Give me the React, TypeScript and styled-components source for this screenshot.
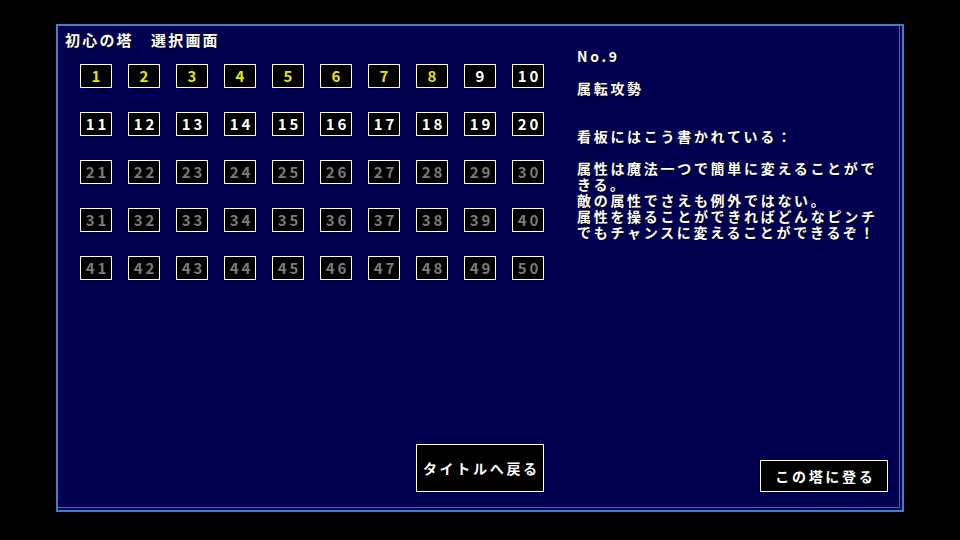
import React from 'react';
import styled, { createGlobalStyle } from 'styled-components';

const GlobalStyle = createGlobalStyle`
    html, body {
        margin: 0;
        padding: 0;
        background: #000;
    }
    body {
        width: 960px;
        height: 540px;
        overflow: hidden;
        font-family: 'Noto Sans CJK JP', 'Noto Sans', sans-serif;
        font-weight: 700;
        color: #fff;
    }
`;

const Screen = styled.div`
    width: 960px;
    height: 540px;
    padding: 24px 0 0 56px;
    box-sizing: border-box;
`;

const Window = styled.div`
    display: flex;
    width: 848px;
    height: 488px;
    box-sizing: border-box;
    padding: 4px 14px 18px 7px;
    background: #000050;
    border: 2px solid #3f7fc4;
    box-shadow: inset -2px -2px 0 #000050, inset -3px -3px 0 #5a5ad8;
`;

const LeftColumn = styled.div`
    display: flex;
    flex-direction: column;
    width: 479px;
`;

const Title = styled.div`
    font-size: 15px;
    line-height: 20px;
    letter-spacing: 2.2px;
    text-shadow: 1px 1px 0 #000;
`;

const FloorGrid = styled.div`
    display: grid;
    grid-template-columns: repeat(10, 32px);
    grid-auto-rows: 24px;
    column-gap: 16px;
    row-gap: 24px;
    margin: 14px 0 0 15px;
`;

type CellState = 'cleared' | 'open' | 'locked';

const cellColors: Record<CellState, string> = {
    cleared: '#e6e600',
    open: '#ffffff',
    locked: '#7a7a7a',
};

const Cell = styled.div<{ $state: CellState }>`
    box-sizing: border-box;
    border: 1px solid #fff;
    background: #000;
    color: ${(p) => cellColors[p.$state]};
    font-size: 15px;
    line-height: 22px;
    letter-spacing: 3px;
    padding-left: 3px;
    text-align: center;
`;

const Spacer = styled.div`
    flex: 1 1 auto;
`;

const CommandButton = styled.div<{ $w: number; $h: number }>`
    align-self: flex-end;
    display: flex;
    align-items: center;
    justify-content: center;
    box-sizing: border-box;
    width: ${(p) => p.$w}px;
    height: ${(p) => p.$h}px;
    padding-left: 2.7px;
    border: 1px solid #fff;
    background: #000;
    font-size: 14px;
    letter-spacing: 2.7px;
    text-shadow: 1px 1px 0 #000;
`;

const RightColumn = styled.div`
    display: flex;
    flex-direction: column;
    flex: 1 1 auto;
    margin-left: 33px;
`;

const Description = styled.div`
    margin-top: 18px;
    font-size: 14px;
    line-height: 16px;
    letter-spacing: 2.7px;
    white-space: pre;
    text-shadow: 1px 1px 0 #000;
`;

const description = [
    'No.9',
    '',
    '属転攻勢',
    '',
    '',
    '看板にはこう書かれている：',
    '',
    '属性は魔法一つで簡単に変えることがで',
    'きる。',
    '敵の属性でさえも例外ではない。',
    '属性を操ることができればどんなピンチ',
    'でもチャンスに変えることができるぞ！',
].join('\n');

const floors = Array.from({ length: 50 }, (_, i) => i + 1);

const stateOf = (n: number): CellState => {
    if (n <= 8) return 'cleared';
    if (n <= 20) return 'open';
    return 'locked';
};

export default function App() {
    return (
        <>
            <GlobalStyle />
            <Screen>
                <Window>
                    <LeftColumn>
                        <Title>初心の塔　選択画面</Title>
                        <FloorGrid>
                            {floors.map((n) => (
                                <Cell key={n} $state={stateOf(n)}>
                                    {n}
                                </Cell>
                            ))}
                        </FloorGrid>
                        <Spacer />
                        <CommandButton $w={128} $h={48}>
                            タイトルへ戻る
                        </CommandButton>
                    </LeftColumn>
                    <RightColumn>
                        <Description>{description}</Description>
                        <Spacer />
                        <CommandButton $w={128} $h={32}>
                            この塔に登る
                        </CommandButton>
                    </RightColumn>
                </Window>
            </Screen>
        </>
    );
}
